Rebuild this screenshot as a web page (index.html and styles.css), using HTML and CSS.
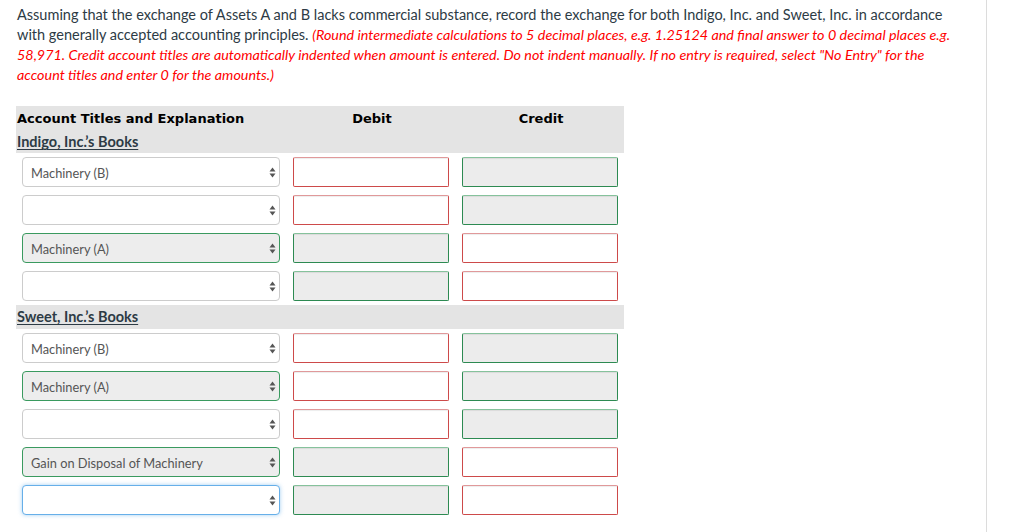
FILE: index.html
```html
<!DOCTYPE html>
<html>
<head>
  <meta charset="UTF-8">
  <title>Journal Entry - Exchange of Assets</title>
  <link rel="stylesheet" href="styles.css">
</head>
<body>
  <div id="page">
    <div id="question">
      <!-- Question text -->
      <p class="prompt">
        Assuming that the exchange of Assets A and B lacks commercial substance, record the exchange for both Indigo, Inc. and Sweet, Inc. in accordance<br>
        with generally accepted accounting principles. <em class="note">(Round intermediate calculations to 5 decimal places, e.g. 1.25124 and final answer to 0 decimal places e.g.<br>
        58,971. Credit account titles are automatically indented when amount is entered. Do not indent manually. If no entry is required, select "No Entry" for the<br>
        account titles and enter 0 for the amounts.)</em>
      </p>

      <!-- Journal entry table -->
      <div class="journal">
        <div class="head">
          <div class="head-title">
            <div class="col-name">Account Titles and Explanation</div>
            <div class="book">Indigo, Inc.’s Books</div>
          </div>
          <div class="col-name center">Debit</div>
          <div class="col-name center">Credit</div>
        </div>

        <div class="row">
          <div class="cell"><div class="select">Machinery (B)<svg class="caret" width="7" height="11" viewBox="0 0 7 11"><path d="M3.5 0.5 L6.5 4.5 L0.5 4.5 Z M0.5 6.5 L6.5 6.5 L3.5 10.5 Z" fill="#555"/></svg></div></div>
          <div class="cell debit"><div class="amount wrong"></div></div>
          <div class="cell credit"><div class="amount right"></div></div>
        </div>
        <div class="row">
          <div class="cell"><div class="select"><svg class="caret" width="7" height="11" viewBox="0 0 7 11"><path d="M3.5 0.5 L6.5 4.5 L0.5 4.5 Z M0.5 6.5 L6.5 6.5 L3.5 10.5 Z" fill="#555"/></svg></div></div>
          <div class="cell debit"><div class="amount wrong"></div></div>
          <div class="cell credit"><div class="amount right"></div></div>
        </div>
        <div class="row">
          <div class="cell"><div class="select correct">Machinery (A)<svg class="caret" width="7" height="11" viewBox="0 0 7 11"><path d="M3.5 0.5 L6.5 4.5 L0.5 4.5 Z M0.5 6.5 L6.5 6.5 L3.5 10.5 Z" fill="#555"/></svg></div></div>
          <div class="cell debit"><div class="amount right"></div></div>
          <div class="cell credit"><div class="amount wrong"></div></div>
        </div>
        <div class="row">
          <div class="cell"><div class="select"><svg class="caret" width="7" height="11" viewBox="0 0 7 11"><path d="M3.5 0.5 L6.5 4.5 L0.5 4.5 Z M0.5 6.5 L6.5 6.5 L3.5 10.5 Z" fill="#555"/></svg></div></div>
          <div class="cell debit"><div class="amount right"></div></div>
          <div class="cell credit"><div class="amount wrong"></div></div>
        </div>

        <div class="section">
          <div class="book">Sweet, Inc.’s Books</div>
        </div>

        <div class="row">
          <div class="cell"><div class="select">Machinery (B)<svg class="caret" width="7" height="11" viewBox="0 0 7 11"><path d="M3.5 0.5 L6.5 4.5 L0.5 4.5 Z M0.5 6.5 L6.5 6.5 L3.5 10.5 Z" fill="#555"/></svg></div></div>
          <div class="cell debit"><div class="amount wrong"></div></div>
          <div class="cell credit"><div class="amount right"></div></div>
        </div>
        <div class="row">
          <div class="cell"><div class="select correct">Machinery (A)<svg class="caret" width="7" height="11" viewBox="0 0 7 11"><path d="M3.5 0.5 L6.5 4.5 L0.5 4.5 Z M0.5 6.5 L6.5 6.5 L3.5 10.5 Z" fill="#555"/></svg></div></div>
          <div class="cell debit"><div class="amount wrong"></div></div>
          <div class="cell credit"><div class="amount right"></div></div>
        </div>
        <div class="row">
          <div class="cell"><div class="select"><svg class="caret" width="7" height="11" viewBox="0 0 7 11"><path d="M3.5 0.5 L6.5 4.5 L0.5 4.5 Z M0.5 6.5 L6.5 6.5 L3.5 10.5 Z" fill="#555"/></svg></div></div>
          <div class="cell debit"><div class="amount wrong"></div></div>
          <div class="cell credit"><div class="amount right"></div></div>
        </div>
        <div class="row">
          <div class="cell"><div class="select correct">Gain on Disposal of Machinery<svg class="caret" width="7" height="11" viewBox="0 0 7 11"><path d="M3.5 0.5 L6.5 4.5 L0.5 4.5 Z M0.5 6.5 L6.5 6.5 L3.5 10.5 Z" fill="#555"/></svg></div></div>
          <div class="cell debit"><div class="amount right"></div></div>
          <div class="cell credit"><div class="amount wrong"></div></div>
        </div>
        <div class="row">
          <div class="cell"><div class="select focused"><svg class="caret" width="7" height="11" viewBox="0 0 7 11"><path d="M3.5 0.5 L6.5 4.5 L0.5 4.5 Z M0.5 6.5 L6.5 6.5 L3.5 10.5 Z" fill="#555"/></svg></div></div>
          <div class="cell debit"><div class="amount right"></div></div>
          <div class="cell credit"><div class="amount wrong"></div></div>
        </div>
      </div>
    </div>
    <div id="side"></div>
  </div>
</body>
</html>
```

FILE: styles.css
```css
/* Page frame: question area with a thin rule on the right */
body {
  margin: 0;
  background: white;
  font-family: Lato, "Open Sans", sans-serif;
  color: #2d3b45;
}
#page {
  display: flex;
  height: 532px;
  overflow: hidden;
}
#question {
  width: 987px;
  box-sizing: border-box;
  padding: 5px 0 0 16px;
  border-right: 1px solid #dcdcdc;
}
#side {
  flex: 1;
}
/* Question text */
.prompt {
  margin: 0;
  padding-left: 1px;
  font-size: 14.5px;
  line-height: 20px;
  white-space: nowrap;
}
.note {
  color: #f00;
  font-size: 14.35px;
}
/* Journal entry table */
.journal {
  width: 608px;
  margin-top: 21px;
}
.head, .row {
  display: grid;
  grid-template-columns: 270px 169px 169px;
}
.head {
  background: #e4e4e4;
  height: 47px;
}
.head-title {
  padding-left: 1px;
}
.col-name {
  font-family: "DejaVu Sans", Verdana, sans-serif;
  font-weight: bold;
  font-size: 13px;
  line-height: 24px;
  padding-top: 1px;
  color: #000;
}
.center {
  text-align: center;
  padding-left: 3px;
}
.book {
  font-weight: bold;
  font-size: 14.5px;
  line-height: 24px;
  color: #2d3b45;
  text-decoration: underline;
  text-underline-offset: 2px;
  text-decoration-thickness: 1px;
}
.head-title .book {
  margin-top: -1px;
}
.section {
  background: #e4e4e4;
  height: 24px;
  padding-left: 1px;
}
/* Cells and controls */
.cell {
  padding: 4px 6px;
}
.cell.debit, .cell.credit {
  padding-left: 7px;
  padding-right: 6px;
}
.select {
  height: 30px;
  box-sizing: border-box;
  border: 1px solid #ccc;
  border-radius: 4px;
  background: white;
  display: flex;
  align-items: center;
  padding: 1px 8px 0;
  font-size: 12.8px;
  color: #555;
  position: relative;
}
.select.correct {
  background: #ededed;
  border-color: #3a9a5f;
}
.select.focused {
  border-color: #66afe9;
  box-shadow: 0 0 4px rgba(102, 175, 233, 0.6);
}
.caret {
  position: absolute;
  right: 3px;
  top: 9px;
}
.amount {
  height: 30px;
  box-sizing: border-box;
  border: 1px solid;
  border-radius: 2px;
  box-shadow: inset 0 1px 1px rgba(0, 0, 0, 0.075);
}
.amount.wrong {
  background: white;
  border-color: #e0999a #cd4a4a #cd4a4a #cd4a4a;
}
.amount.right {
  background: #ececec;
  border-color: #86c29c #2d8a52 #2d8a52 #2d8a52;
}
```
